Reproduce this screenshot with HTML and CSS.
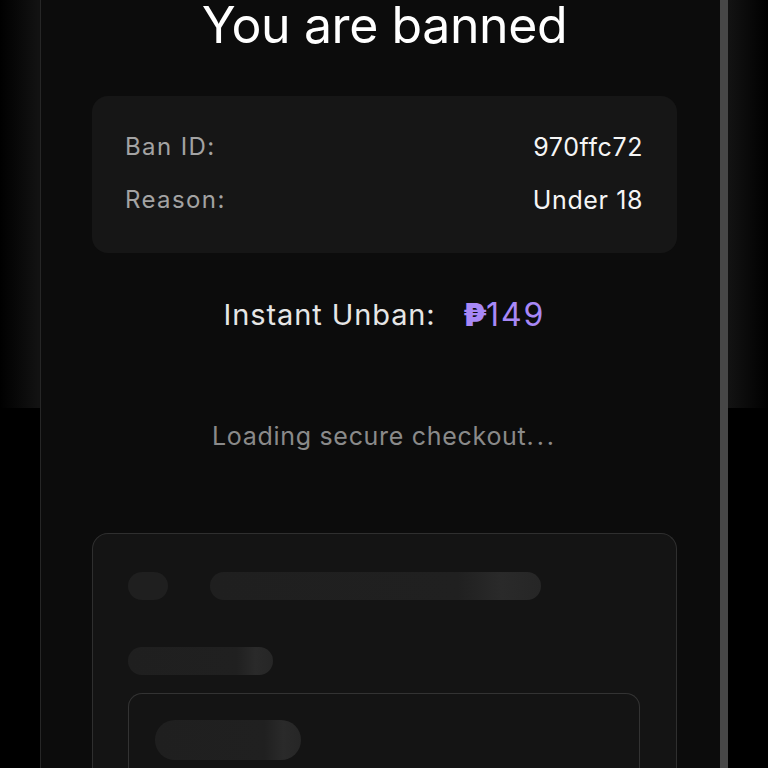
FILE: index.html
```html
<!DOCTYPE html>
<html>
<head>
<meta charset="utf-8">
<link rel="stylesheet" href="styles.css">
</head>
<body>
<div class="stage">
  <div class="panel">
    <h1 class="title">You are banned</h1>
    <div class="info-card">
      <div class="row"><span class="label">Ban ID:</span><span class="value">970ffc72</span></div>
      <div class="row"><span class="label">Reason:</span><span class="value">Under 18</span></div>
    </div>
    <div class="unban"><span class="unban-label">Instant Unban:</span><span class="price"><span class="peso">₱</span>149</span></div>
    <div class="loading">Loading secure checkout<span class="dots">...</span></div>
    <div class="skeleton-card">
      <div class="sk-row">
        <div class="sk sk-dot"></div>
        <div class="sk sk-long shimmer"></div>
      </div>
      <div class="sk sk-mid shimmer"></div>
      <div class="sk-inner">
        <div class="sk sk-pill shimmer"></div>
      </div>
    </div>
  </div>
</div>
</body>
</html>
```
FILE: styles.css
```css
html, body {
  margin: 0;
  padding: 0;
  background: #000;
  overflow: hidden;
}
.stage {
  width: 768px;
  height: 768px;
  background-color: #000;
  background-image: linear-gradient(to right, #000 0, #121212 38px, #121212 730px, #000 768px);
  background-size: 100% 408px;
  background-repeat: no-repeat;
  font-family: "Inter", "Noto Sans", sans-serif;
}
.panel {
  margin-left: 40px;
  width: 679px;
  height: 768px;
  background: #0c0c0c;
  border-left: 1px solid #262626;
  border-right: 8px solid #474747;
  display: flex;
  flex-direction: column;
  align-items: stretch;
}
.title {
  margin: 0;
  padding-left: 8px;
  font-size: 50px;
  font-weight: 400;
  line-height: 50px;
  color: #fff;
  text-align: center;
  letter-spacing: -0.4px;
}
.info-card {
  margin: 46px 43px 0 51px;
  height: 157px;
  box-sizing: border-box;
  background: #161616;
  border-radius: 16px;
  padding: 36px 34px 0 33px;
  display: flex;
  flex-direction: column;
  gap: 23px;
}
.row {
  display: flex;
  justify-content: space-between;
  align-items: center;
  height: 30px;
  font-size: 24px;
  line-height: 30px;
}
.label { color: #a3a3a3; letter-spacing: 1.4px; }
.value { color: #f5f5f5; font-size: 25px; letter-spacing: 0.6px; }
.unban {
  margin-top: 41px;
  padding-left: 8px;
  display: flex;
  justify-content: center;
  align-items: center;
  gap: 27px;
  height: 40px;
  font-size: 29px;
}
.unban-label { color: #e6e6e6; letter-spacing: 0.9px; }
.price { color: #a888f7; font-size: 32px; letter-spacing: 2px; }
.peso { font-weight: 900; letter-spacing: -1px; }
.loading {
  margin-top: 84px;
  padding-left: 8px;
  text-align: center;
  font-size: 25px;
  line-height: 36px;
  color: #8a8a8a;
  letter-spacing: 0.7px;
}
.dots { letter-spacing: 3px; }
.skeleton-card {
  margin: 79px 43px 0 51px;
  flex: 1;
  background: #141414;
  border: 1px solid #2f2f2f;
  border-bottom: none;
  border-radius: 16px 16px 0 0;
  padding: 38px 36px 0 35px;
  display: flex;
  flex-direction: column;
}
.sk {
  background: #1f1f1f;
  border-radius: 14px;
  height: 28px;
}
.sk-row {
  display: flex;
  gap: 42px;
}
.sk-dot { width: 40px; }
.sk-long { width: 331px; }
.sk-mid { width: 145px; margin-top: 47px; }
.shimmer {
  background: linear-gradient(to right, #1f1f1f 0, #202020 75%, #2a2a2a 88%, #262626 100%);
}
.sk-inner {
  margin-top: 18px;
  flex: 1;
  border: 1px solid #333;
  border-bottom: none;
  border-radius: 14px 14px 0 0;
  padding: 26px 26px 0 26px;
}
.sk-pill {
  width: 146px;
  height: 40px;
  border-radius: 20px;
}
```
